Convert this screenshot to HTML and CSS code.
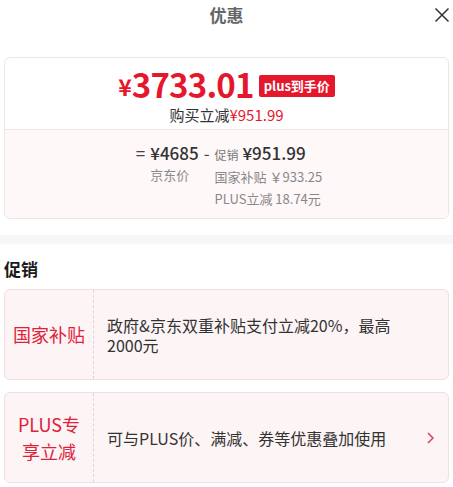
FILE: index.html
```html
<!DOCTYPE html>
<html lang="zh-CN">
<head>
    <meta charset="UTF-8">
    <meta name="viewport" content="width=device-width, initial-scale=1.0">
    <title>优惠</title>
    <link rel="stylesheet" href="styles.css">
</head>
<body>
    <div class="header">
        <h1>优惠</h1>
        <button class="close-btn" aria-label="关闭">
            <svg width="16" height="16" viewBox="0 0 16 16"><path d="M1.5 1.5 L14.5 14.5 M14.5 1.5 L1.5 14.5" stroke="#333" stroke-width="1.5" fill="none"/></svg>
        </button>
    </div>

    <div class="price-card">
        <div class="price-top">
            <div class="final-price">
                <span class="yen">¥</span><span class="amount">3733.01</span>
                <span class="plus-tag">plus到手价</span>
            </div>
            <div class="saving">购买立减<span class="red">¥951.99</span></div>
        </div>
        <div class="price-detail">
            <span class="op">=</span>
            <div class="col">
                <div class="big">¥4685</div>
                <div class="small">京东价</div>
            </div>
            <span class="op">-</span>
            <div class="col">
                <div class="big"><span class="small-inline">促销</span> ¥951.99</div>
                <div class="small">国家补贴 ￥933.25</div>
                <div class="small">PLUS立减 18.74元</div>
            </div>
        </div>
    </div>

    <div class="divider-band"></div>

    <h2 class="section-title">促销</h2>

    <div class="promo">
        <div class="promo-label">国家补贴</div>
        <div class="promo-body">
            <div class="promo-text">政府&amp;京东双重补贴支付立减20%，最高<span class="nowrap">2000元</span></div>
        </div>
    </div>

    <div class="promo">
        <div class="promo-label">PLUS专<br>享立减</div>
        <div class="promo-body">
            <div class="promo-text">可与PLUS价、满减、券等优惠叠加使用</div>
            <svg class="chevron" width="7" height="12" viewBox="0 0 7 12"><path d="M1 1 L6 6 L1 11" stroke="#d8405a" stroke-width="1.5" fill="none"/></svg>
        </div>
    </div>
</body>
</html>
```

FILE: styles.css
```css
body {
    margin: 0;
    font-family: "Noto Sans CJK SC", "Noto Sans", sans-serif;
    background-color: white;
    color: #333;
}

.header {
    position: relative;
    height: 30px;
    text-align: center;
}

.header h1 {
    margin: 0;
    font-size: 17px;
    line-height: 30px;
    font-weight: bold;
    color: #666;
}

.close-btn {
    position: absolute;
    right: 3px;
    top: 7px;
    padding: 0;
    border: none;
    background: transparent;
    cursor: pointer;
}

.price-card {
    margin: 27px 4px 0;
    border: 1px solid #f2e1e5;
    border-radius: 6px;
    overflow: hidden;
}

.price-top {
    padding: 7px 0 4px;
    text-align: center;
    border-bottom: 1px solid #f4e6ea;
}

.final-price {
    display: flex;
    justify-content: center;
    align-items: center;
    height: 38px;
    color: #e5172c;
}

.final-price .yen {
    font-size: 23px;
    line-height: 24px;
    font-weight: bold;
    margin-top: 4px;
}

.final-price .amount {
    font-size: 33px;
    line-height: 36px;
    font-weight: bold;
    letter-spacing: -0.8px;
}

.plus-tag {
    margin-left: 5px;
    margin-top: 3px;
    padding: 0 5px;
    height: 22px;
    line-height: 22px;
    border-radius: 2px;
    background-color: #e5172c;
    color: white;
    font-size: 13px;
    font-weight: bold;
}

.saving {
    margin-top: 1px;
    font-size: 15px;
    line-height: 21px;
    color: #333;
}

.red {
    color: #e5172c;
}

.price-detail {
    display: flex;
    justify-content: center;
    align-items: flex-start;
    padding: 12px 0 8px;
    background-color: #fef8f8;
}

.price-detail .op {
    font-size: 17px;
    line-height: 22px;
    color: #444;
    margin: 0 5px;
}

.price-detail .big {
    font-size: 17px;
    line-height: 22px;
    font-weight: 500;
    color: #333;
}

.price-detail .small {
    font-size: 13px;
    line-height: 22px;
    color: #888;
}

.small-inline {
    font-size: 12px;
    font-weight: normal;
    color: #777;
}

.divider-band {
    margin-top: 16px;
    height: 9px;
    background-color: #f6f7f9;
}

.section-title {
    margin: 13px 0 0 4px;
    font-size: 17px;
    line-height: 24px;
    font-weight: bold;
    color: #1a1a1a;
}

.promo {
    display: flex;
    margin: 8px 4px 12px;
    min-height: 89px;
    border: 1px solid #f3dde2;
    border-radius: 6px;
    background-color: #fdf4f5;
}

.promo-label {
    width: 88px;
    flex-shrink: 0;
    display: flex;
    align-items: center;
    justify-content: center;
    text-align: center;
    border-right: 1px dashed #ebcfd5;
    font-size: 18px;
    line-height: 27px;
    color: #e0213a;
}

.promo-body {
    flex: 1;
    display: flex;
    align-items: center;
    padding: 0 14px 0 13px;
}

.promo-text {
    flex: 1;
    padding-right: 20px;
    font-size: 16px;
    line-height: 20px;
    color: #333;
}

.nowrap {
    white-space: nowrap;
}

.chevron {
    flex-shrink: 0;
}
```
